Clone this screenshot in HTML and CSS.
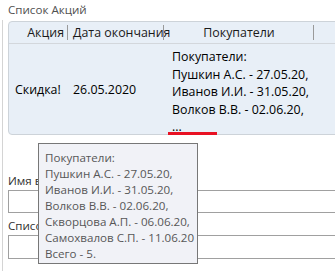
FILE: index.html
```html
<!DOCTYPE html>
<html lang="ru">
<head>
    <meta charset="UTF-8">
    <title>Список Акций</title>
    <link rel="stylesheet" href="styles.css">
</head>
<body>
    <div class="title">Список Акций</div>
    <div class="panel">
        <div class="grid">
            <div class="grid-head">
                <div class="col col-name head-right">Акция</div>
                <div class="col col-date">Дата окончания</div>
                <div class="col col-buyers head-center">Покупатели</div>
                <div class="col col-rest"></div>
            </div>
            <div class="grid-row">
                <div class="col col-name cell-middle">Скидка!</div>
                <div class="col col-date cell-middle">26.05.2020</div>
                <div class="col col-buyers cell-lines">
                    <div>Покупатели:</div>
                    <div>Пушкин А.С. - 27.05.20,</div>
                    <div>Иванов И.И. - 31.05.20,</div>
                    <div>Волков В.В. - 02.06.20,</div>
                    <div>...</div>
                </div>
            </div>
        </div>

        <div class="field-label">Имя владельца</div>
        <div class="textbox"></div>
        <div class="field-label">Список покупателей</div>
        <div class="textbox tall"></div>
        <div class="field-label last">Адрес</div>
    </div>

    <!-- marks the trimmed cell -->
    <div class="underline"></div>

    <div class="tooltip">
        <div>Покупатели:</div>
        <div>Пушкин А.С. - 27.05.20,</div>
        <div>Иванов И.И. - 31.05.20,</div>
        <div>Волков В.В. - 02.06.20,</div>
        <div>Скворцова А.П. - 06.06.20,</div>
        <div>Самохвалов С.П. - 11.06.20</div>
        <div>Всего - 5.</div>
    </div>
</body>
</html>
```

FILE: styles.css
```css
body {
    margin: 0;
    padding: 0;
    width: 335px;
    height: 271px;
    overflow: hidden;
    background-color: #fff;
    font-family: "Open Sans", "Noto Sans", sans-serif;
    font-size: 11.6px;
    color: #000;
    position: relative;
}
.title {
    height: 20px;
    line-height: 20px;
    padding-left: 8px;
    color: #505050;
}
.panel {
    margin-left: 2px;
    border-left: 1px solid #d4d4d4;
    padding-left: 5px;
    padding-top: 1px;
    height: 260px;
}
.grid {
    width: 345px;
    height: 112px;
    background-color: #e8eff7;
    border: 1px solid #cdd3d9;
    border-radius: 4px;
    font-size: 12.4px;
}
.grid-head {
    display: flex;
    height: 21px;
    border-bottom: 1px solid #d3d7dc;
}
.col {
    box-sizing: border-box;
    white-space: nowrap;
}
.grid-head .col {
    line-height: 21px;
    color: #1a1a1a;
    position: relative;
}
.grid-head .col::after {
    content: "";
    position: absolute;
    right: 0;
    top: 3px;
    height: 15px;
    border-right: 1px solid #9a9a9a;
}
.grid-head .col-rest::after {
    display: none;
}
.col-name {
    width: 59px;
    padding-left: 6px;
}
.col-date {
    width: 96px;
    padding-left: 5px;
}
.col-buyers {
    width: 150px;
    padding-left: 8px;
}
.col-rest {
    flex: 1;
}
.head-right {
    text-align: right;
    padding-right: 4px;
}
.head-center {
    text-align: center;
    padding-left: 0;
}
.grid-row {
    display: flex;
    height: 90px;
}
.cell-middle {
    display: flex;
    align-items: center;
}
.cell-lines {
    padding-top: 4px;
    line-height: 17.5px;
}
.field-label {
    margin-top: 36px;
    height: 19px;
    line-height: 19px;
    color: #303030;
}
.textbox {
    width: 340px;
    height: 21px;
    border: 1px solid #a0a0a0;
}
.field-label + .textbox + .field-label {
    margin-top: 3px;
}
.field-label + .textbox + .field-label.last {
    margin-top: 6px;
}
.textbox.tall {
    height: 22px;
}
.underline {
    position: absolute;
    left: 168px;
    top: 132px;
    width: 49px;
    height: 3px;
    background-color: #e81123;
}
.tooltip {
    position: absolute;
    left: 38px;
    top: 143px;
    width: 160px;
    height: 121px;
    box-sizing: border-box;
    padding: 6px 0 0 6px;
    background-color: #f1f2f7;
    border: 1px solid #777;
    color: #575757;
    line-height: 16px;
    white-space: nowrap;
    overflow: hidden;
}
```
